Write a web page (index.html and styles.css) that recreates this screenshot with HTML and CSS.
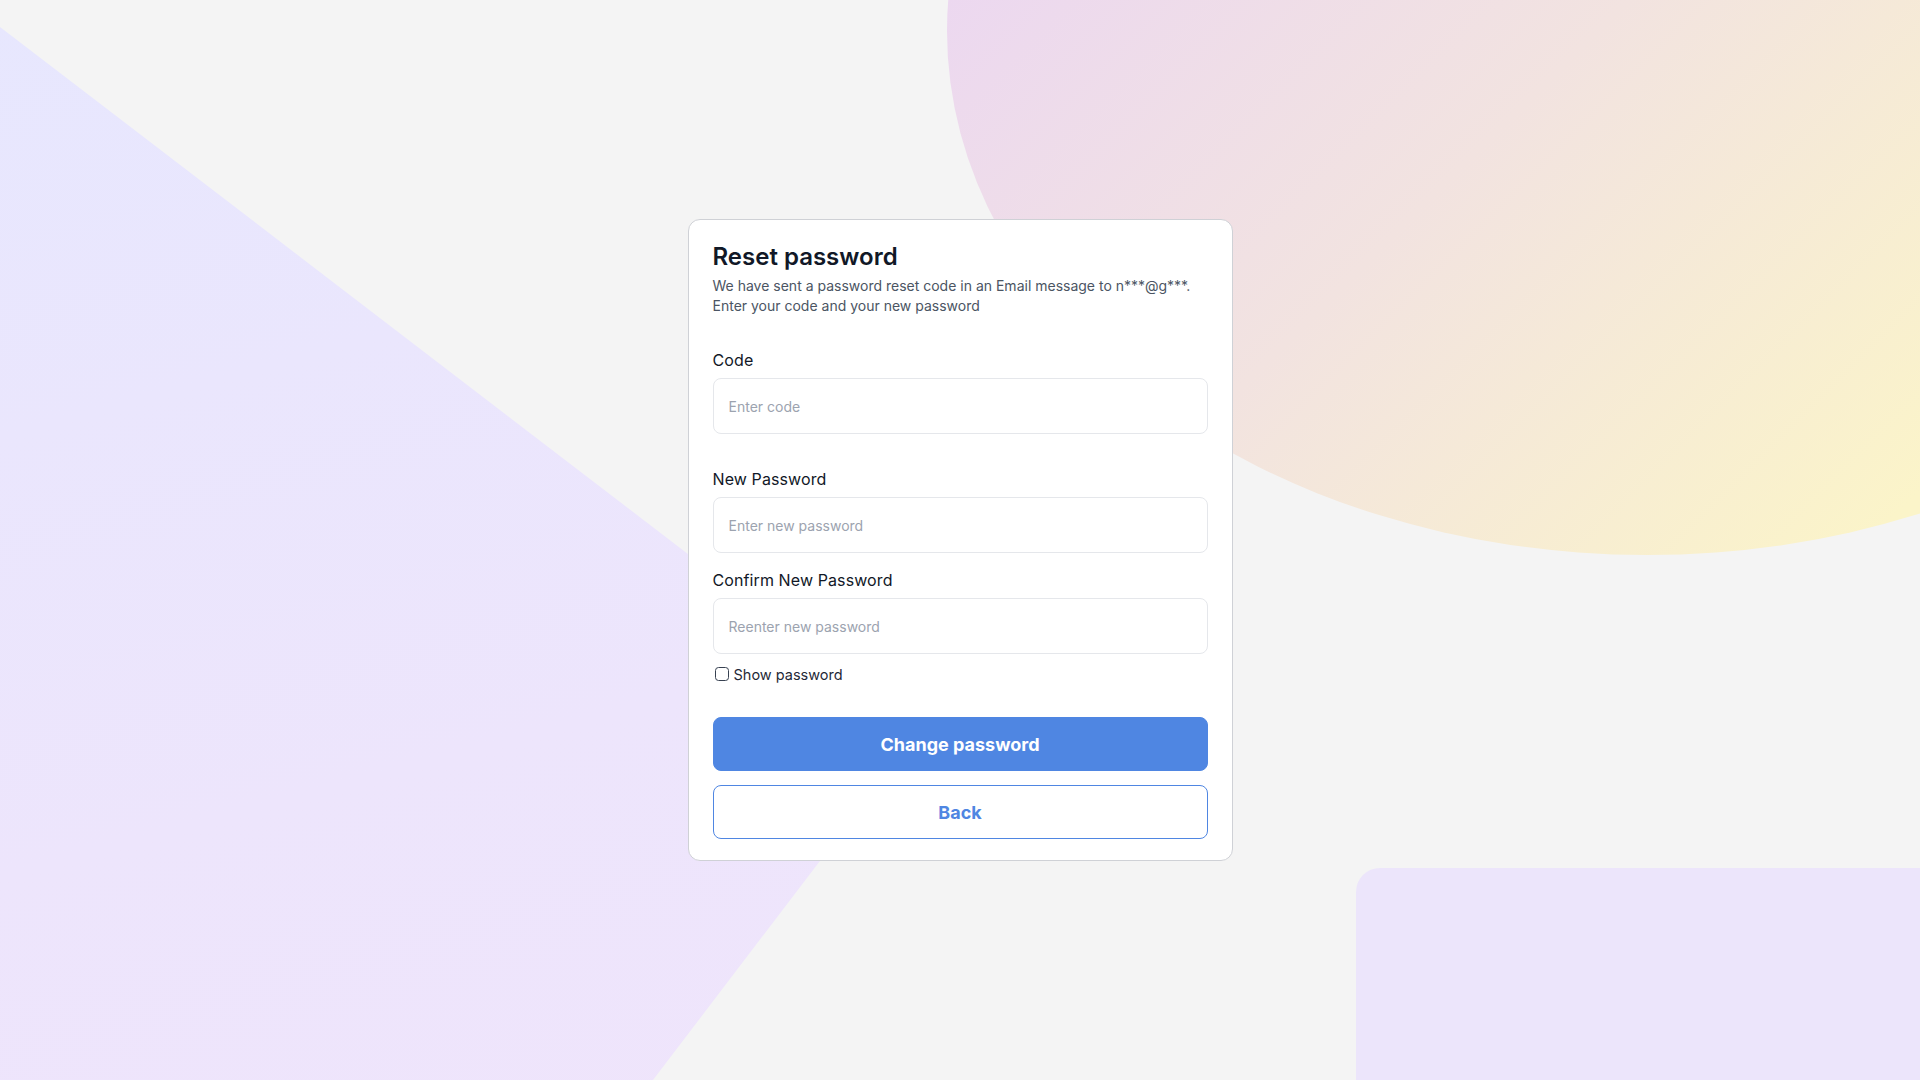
FILE: index.html
```html
<!DOCTYPE html>
<html lang="en">
<head>
<meta charset="utf-8">
<title>Reset password</title>
<link rel="stylesheet" href="styles.css">
</head>
<body>
<div class="bg" aria-hidden="true">
  <div class="shape-left"></div>
  <div class="shape-circle"></div>
  <div class="shape-rect"></div>
</div>
<main class="page">
  <form class="card">
    <h1 class="title">Reset password</h1>
    <p class="subtitle">We have sent a password reset code in an Email message to n***@g***.<br>Enter your code and your new password</p>

    <div class="field field-code">
      <label class="label" for="code">Code</label>
      <input class="input" id="code" type="text" placeholder="Enter code">
    </div>

    <div class="field field-new">
      <label class="label" for="pw">New Password</label>
      <input class="input" id="pw" type="password" placeholder="Enter new password">
    </div>

    <div class="field field-confirm">
      <label class="label" for="pw2">Confirm New Password</label>
      <input class="input" id="pw2" type="password" placeholder="Reenter new password">
    </div>

    <label class="show">
      <input class="checkbox" type="checkbox">
      <span>Show password</span>
    </label>

    <button class="btn btn-primary" type="button">Change password</button>
    <button class="btn btn-outline" type="button">Back</button>
  </form>
</main>
</body>
</html>
```

FILE: styles.css
```css
* { box-sizing: border-box; }

html, body {
  margin: 0;
  padding: 0;
  width: 100%;
  height: 100%;
}

body {
  background: #f4f4f4;
  font-family: Inter, "Noto Sans", "Liberation Sans", sans-serif;
  overflow: hidden;
  position: relative;
}

.bg {
  position: absolute;
  inset: 0;
  overflow: hidden;
  z-index: 0;
}

.shape-left {
  position: absolute;
  inset: 0;
  background: linear-gradient(165deg, #e7e7fe 0%, #ede5fc 55%, #f0e4fb 100%);
  clip-path: polygon(0 27px, 919px 731px, 653px 1080px, 0 1080px);
}

.shape-circle {
  position: absolute;
  left: 947px;
  top: -493px;
  width: 1400px;
  height: 1048px;
  border-radius: 50%;
  background: linear-gradient(135deg, #ecd8f0 20%, #f2e3e0 48%, #fbf4c9 80%);
}

.shape-rect {
  position: absolute;
  left: 1356px;
  top: 868px;
  right: 0;
  bottom: 0;
  border-top-left-radius: 24px;
  background: #ece5fb;
}

.page {
  position: relative;
  z-index: 1;
  height: 100%;
  display: flex;
  align-items: center;
  justify-content: center;
}

.card {
  width: 545px;
  background: #ffffff;
  border: 1px solid #cfd1d6;
  border-radius: 12px;
  padding: 21px 24px 21px;
  display: flex;
  flex-direction: column;
}

.title {
  margin: 0;
  font-size: 24px;
  line-height: 32px;
  font-weight: 600;
  color: #111827;
}

.subtitle {
  margin: 3px 0 0;
  font-size: 14px;
  line-height: 20px;
  color: #4b5563;
}

.field {
  display: flex;
  flex-direction: column;
}

.field-code { margin-top: 32px; }
.field-new { margin-top: 33px; }
.field-confirm { margin-top: 15px; }

.label {
  font-size: 16px;
  line-height: 24px;
  font-weight: 400;
  letter-spacing: 0.1px;
  color: #111827;
  margin-bottom: 6px;
}

.input {
  height: 56px;
  width: 100%;
  border: 1px solid #e5e7eb;
  border-radius: 8px;
  padding: 0 15px;
  font-family: inherit;
  font-size: 14px;
  color: #111827;
  background: #ffffff;
  outline: none;
}

.input::placeholder {
  color: #9ca3af;
}

.show {
  margin-top: 10px;
  display: flex;
  align-items: center;
  gap: 5px;
  height: 20px;
  font-size: 14.5px;
  color: #1f2937;
  padding-left: 2px;
}

.checkbox {
  appearance: none;
  -webkit-appearance: none;
  margin: 0;
  width: 14px;
  height: 14px;
  border: 1.5px solid #374151;
  border-radius: 3.5px;
  background: #fff;
}

.btn {
  height: 54px;
  width: 100%;
  border-radius: 8px;
  font-family: inherit;
  font-size: 18px;
  font-weight: 700;
  cursor: pointer;
}

.btn-primary {
  margin-top: 33px;
  background: #4f86e2;
  border: 1px solid #4f86e2;
  color: #ffffff;
}

.btn-outline {
  margin-top: 14px;
  background: #ffffff;
  border: 1px solid #4f86e2;
  color: #4f86e2;
}
```
